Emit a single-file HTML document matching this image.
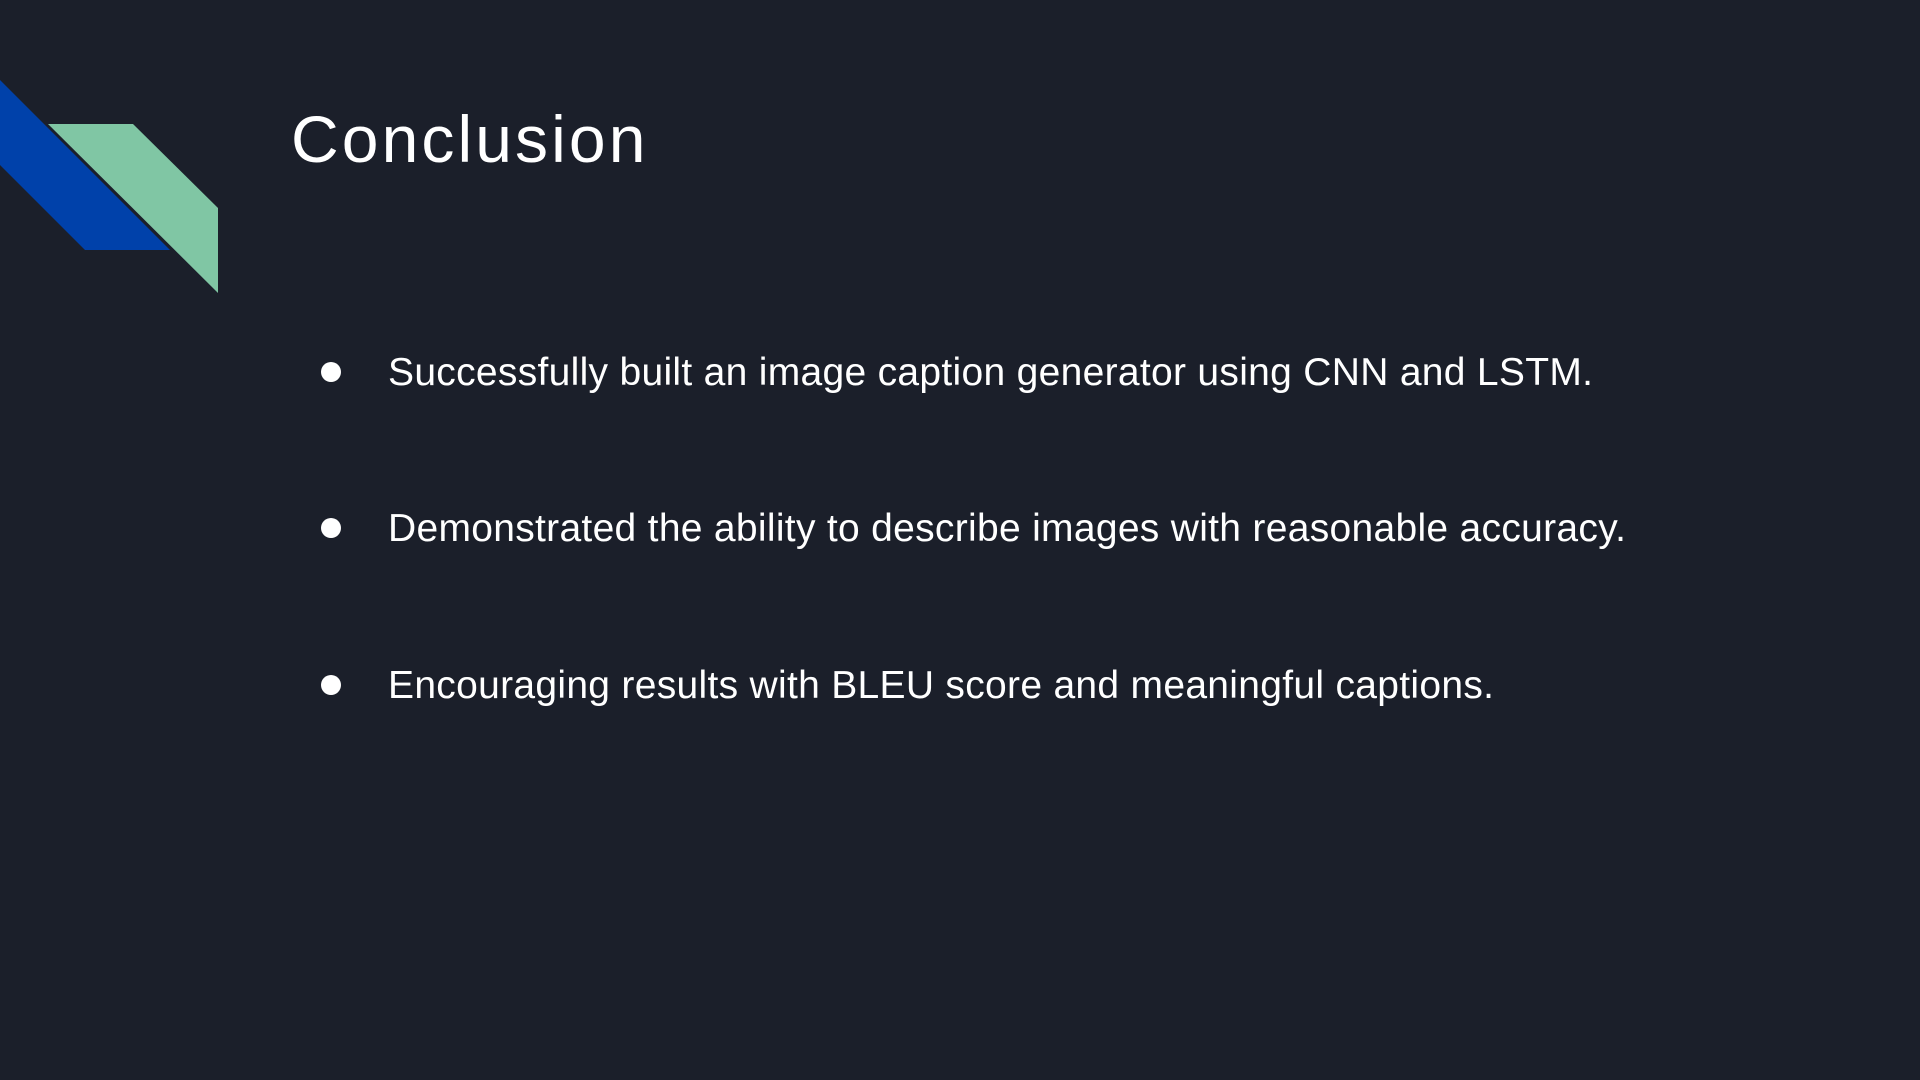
<!DOCTYPE html>
<html><head><meta charset="utf-8"><style>
html,body{margin:0;padding:0;}
body{width:1920px;height:1080px;background:#1b1f2a;position:relative;overflow:hidden;font-family:"Liberation Sans",sans-serif;color:#fff;}
h1{position:absolute;left:291px;top:101px;margin:0;font-weight:normal;font-size:66px;letter-spacing:3.1px;}
.b{position:absolute;left:388px;font-size:39px;letter-spacing:0.3px;white-space:nowrap;}
.d{position:absolute;left:321px;width:20px;height:20px;border-radius:50%;background:#fff;}
</style></head><body>
<svg width="240" height="300" style="position:absolute;left:0;top:0">
<polygon points="0,80 170,250 85,250 0,165" fill="#0041aa"/>
<polygon points="48,124 133,124 218,208 218,293" fill="#80c6a4"/>
</svg>
<h1>Conclusion</h1>
<div class="d" style="top:362px"></div><div class="b" style="top:351px">Successfully built an image caption generator using CNN and LSTM.</div>
<div class="d" style="top:518px"></div><div class="b" style="top:507px">Demonstrated the ability to describe images with reasonable accuracy.</div>
<div class="d" style="top:675px"></div><div class="b" style="top:664px">Encouraging results with BLEU score and meaningful captions.</div>
</body></html>
